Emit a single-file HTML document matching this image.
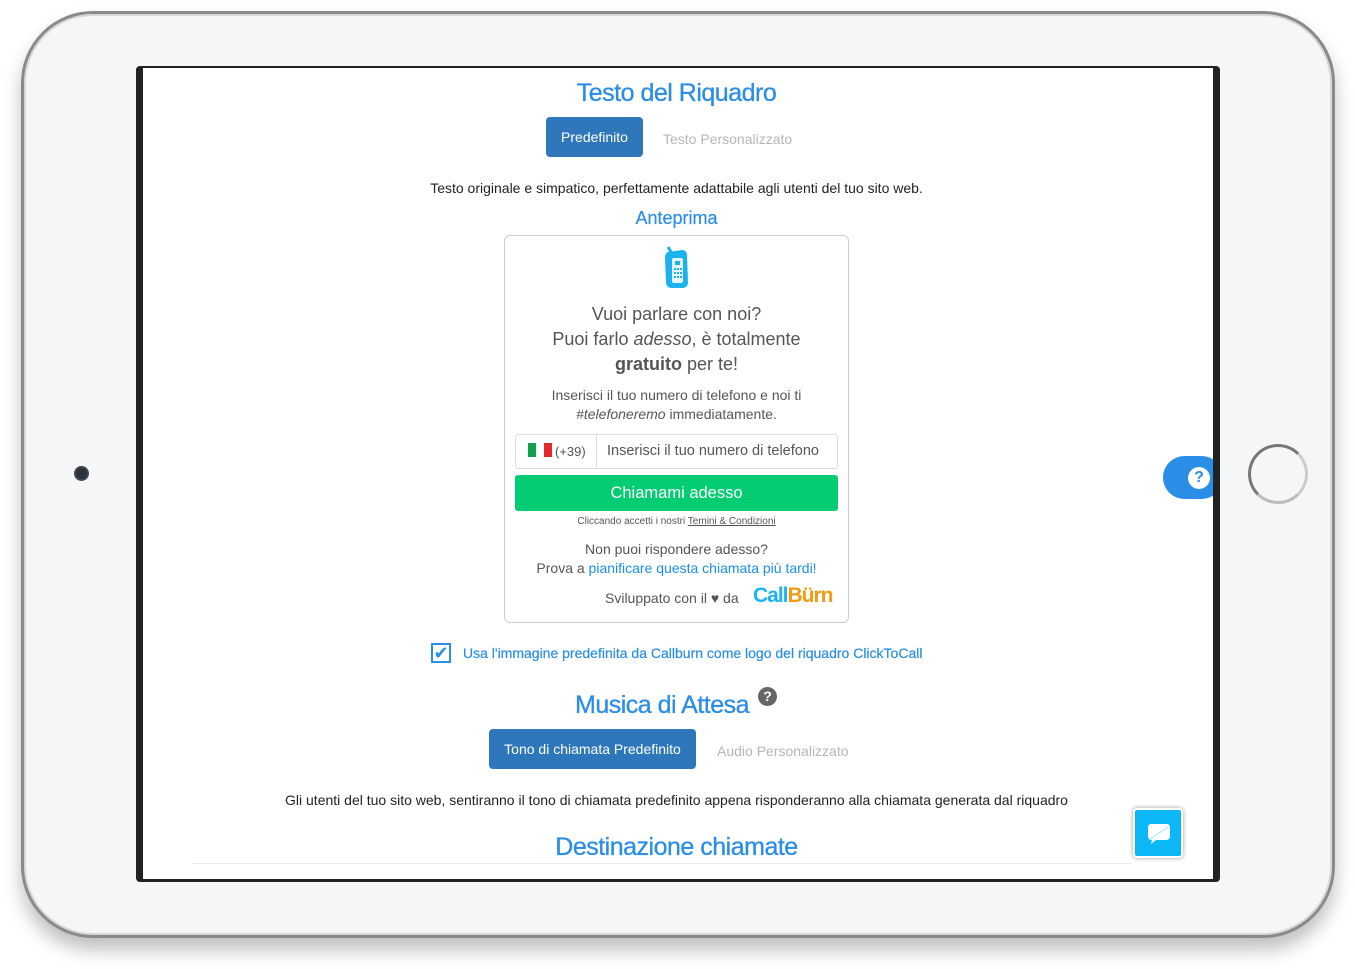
<!DOCTYPE html>
<html><head><meta charset="utf-8"><style>
*{margin:0;padding:0;box-sizing:border-box}
body{width:1355px;height:969px;background:#fff;position:relative;overflow:hidden;font-family:"Liberation Sans",sans-serif}
.dev{position:absolute;left:21px;top:11px;width:1314px;height:927px;border-radius:72px;background:#f5f6f8;border:3px solid #8a8a8a;box-shadow:0 12px 18px rgba(0,0,0,.25),inset 0 0 0 2px #d8d8d8}
.scr{position:absolute;left:136px;top:66px;width:1084px;height:816px;background:#222;border-radius:4px}
.in{position:absolute;left:143px;top:68px;width:1070px;height:811px;background:#fff;overflow:hidden}
.a{position:absolute;white-space:nowrap}
.c{text-align:center}
.blue{color:#2a8de6}
.h{font-size:25px;letter-spacing:-0.5px;-webkit-text-stroke:0.3px #2a8de6}
.btn{position:absolute;background:#2f77bb;color:#fff;border-radius:4px;font-size:14px;text-align:center}
.r{font-family:"Liberation Sans",sans-serif;color:#555}
</style></head><body>
<div class="dev"></div>
<div style="position:absolute;left:74px;top:466px;width:15px;height:15px;border-radius:50%;background:#2a3440;border:2px solid #444"></div>
<div style="position:absolute;left:1248px;top:444px;width:60px;height:60px;border-radius:50%;border:3px solid #777;border-right-color:#ccc;border-bottom-color:#bbb"></div>
<div class="scr"></div>
<div class="in">
 <div class="a c blue h" style="left:0;width:1067px;top:11px">Testo del Riquadro</div>
 <div class="btn" style="left:403px;top:49px;width:97px;height:40px;line-height:40px">Predefinito</div>
 <div class="a" style="left:520px;top:63px;font-size:14px;color:#b5b5b5">Testo Personalizzato</div>
 <div class="a c" style="left:0;width:1067px;top:112px;font-size:14px;color:#222">Testo originale e simpatico, perfettamente adattabile agli utenti del tuo sito web.</div>
 <div class="a c blue" style="left:0;width:1067px;top:140px;font-size:18px;-webkit-text-stroke:0.2px #2a8de6">Anteprima</div>
 <div style="position:absolute;left:361px;top:167px;width:345px;height:388px;border:1px solid #ccc;border-radius:6px"></div>
 <svg class="a" style="left:519px;top:178px" width="30" height="46" viewBox="0 0 30 46"><path d="M6 6 L20 4 Q25 4 25 10 L26 36 Q26 42 20 42 L10 42 Q4 42 4 36 L3 12 Q3 7 6 6Z" fill="#1ab3f0"/><rect x="10" y="12" width="11" height="25" rx="2" fill="#e8f7ff"/><g fill="#1ab3f0"><rect x="12" y="22" width="2" height="2"/><rect x="15" y="22" width="2" height="2"/><rect x="18" y="22" width="2" height="2"/><rect x="12" y="26" width="2" height="2"/><rect x="15" y="26" width="2" height="2"/><rect x="18" y="26" width="2" height="2"/><rect x="12" y="30" width="2" height="2"/><rect x="15" y="30" width="2" height="2"/><rect x="18" y="30" width="2" height="2"/><rect x="13" y="15" width="5" height="4"/></g><path d="M6 1 L9 6" stroke="#1ab3f0" stroke-width="3"/></svg>
 <div class="a c r" style="left:361px;width:345px;top:234px;font-size:18px;line-height:25px">Vuoi parlare con noi?<br>Puoi farlo <i>adesso</i>, è totalmente<br><span style="font-weight:bold;color:#555">gratuito</span> per te!</div>
 <div class="a c r" style="left:361px;width:345px;top:318px;font-size:14px;line-height:19px">Inserisci il tuo numero di telefono e noi ti<br><i>#telefoneremo</i> immediatamente.</div>
 <div style="position:absolute;left:372px;top:366px;width:323px;height:35px;border:1px solid #ddd;border-radius:3px"></div>
 <div style="position:absolute;left:453px;top:366px;width:1px;height:35px;background:#ddd"></div>
 <div class="a" style="left:385px;top:375px;width:8px;height:14px;background:#12a04a"></div>
 <div class="a" style="left:393px;top:375px;width:8px;height:14px;background:#fff"></div>
 <div class="a" style="left:401px;top:375px;width:8px;height:14px;background:#e3272b"></div>
 <div class="a r" style="left:412px;top:376px;font-size:13px">(+39)</div>
 <div class="a r" style="left:464px;top:375px;font-size:14.5px">Inserisci il tuo numero di telefono</div>
 <div class="a c" style="left:372px;top:407px;width:323px;height:36px;line-height:36px;background:#03cc72;border-radius:3px;color:#fff;font-size:16.5px">Chiamami adesso</div>
 <div class="a c r" style="left:361px;width:345px;top:448px;font-size:10px">Cliccando accetti i nostri <u>Temini &amp; Condizioni</u></div>
 <div class="a c r" style="left:361px;width:345px;top:472px;font-size:14px;line-height:19px">Non puoi rispondere adesso?<br>Prova a <span style="color:#1a8fe8">pianificare questa chiamata più tardi!</span></div>
 <div class="a r" style="left:462px;top:522px;font-size:14px">Sviluppato con il <span style="color:#555">♥</span> da</div>
 <div class="a" style="left:610px;top:516px;font-size:21px;font-weight:bold;letter-spacing:-1px"><span style="color:#17b6f2">Call</span><span style="color:#f39a12">Bürn</span></div>
 <div class="a" style="left:288px;top:575px;width:20px;height:20px;border:2px solid #2a8de6;color:#2a8de6;font-size:18px;line-height:16px;text-align:center">✔</div>
 <div class="a blue" style="left:320px;top:577px;font-size:14px;-webkit-text-stroke:0.2px #2a8de6">Usa l'immagine predefinita da Callburn come logo del riquadro ClickToCall</div>
 <div class="a blue h" style="left:432px;top:623px">Musica di Attesa</div>
 <div class="a c" style="left:615px;top:619px;width:19px;height:19px;border-radius:50%;background:#666;color:#fff;font-size:14px;font-weight:bold;line-height:19px">?</div>
 <div class="btn" style="left:346px;top:661px;width:207px;height:40px;line-height:40px">Tono di chiamata Predefinito</div>
 <div class="a" style="left:574px;top:675px;font-size:14px;color:#b5b5b5">Audio Personalizzato</div>
 <div class="a c" style="left:0;width:1067px;top:724px;font-size:14px;color:#222">Gli utenti del tuo sito web, sentiranno il tono di chiamata predefinito appena risponderanno alla chiamata generata dal riquadro</div>
 <div class="a c blue h" style="left:0;width:1067px;top:765px">Destinazione chiamate</div>
 <div class="a" style="left:49px;top:795px;width:940px;height:1px;background:#e8e8e8"></div>
 <div class="a" style="left:1020px;top:388px;width:60px;height:43px;border-radius:22px;background:#2a8de6"></div>
 <div class="a c" style="left:1045px;top:399px;width:22px;height:22px;border-radius:50%;background:#fff;color:#2a8de6;font-weight:bold;font-size:16px;line-height:22px">?</div>
 <div class="a" style="left:990px;top:740px;width:50px;height:50px;border-radius:4px;background:#0bb8f5;border:2px solid #fff;box-shadow:0 0 4px rgba(0,0,0,.4)"><svg style="position:absolute;left:11px;top:11px" width="26" height="26" viewBox="0 0 26 26"><path d="M5 3 H21 Q24 3 24 7 V15 Q24 19 20 19 H10 L5 23 L6 19 Q2 19 2 15 V7 Q2 3 5 3Z" fill="#fff"/><path d="M4 18 L22 6" stroke="#9fe2fb" stroke-width="1"/></svg></div>
</div>
</body></html>
